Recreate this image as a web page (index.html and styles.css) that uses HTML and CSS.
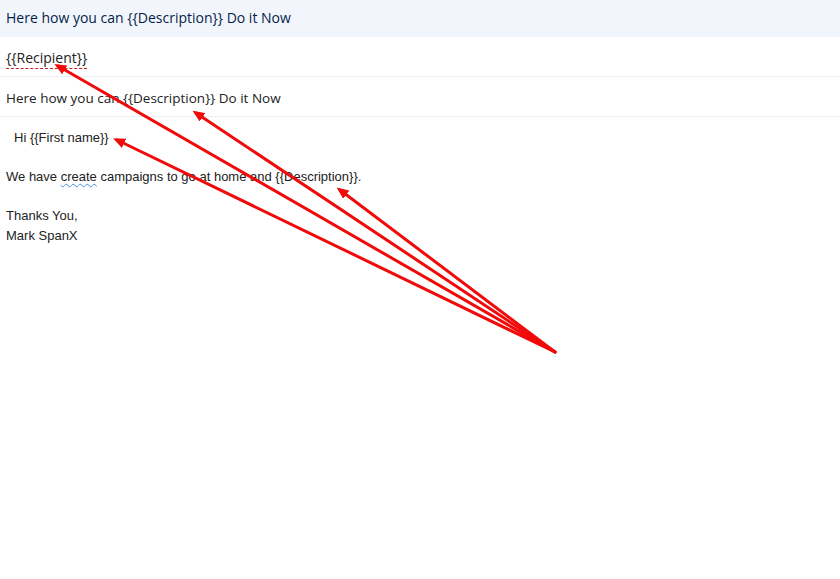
FILE: index.html
```html
<!DOCTYPE html>
<html>
<head>
<meta charset="utf-8">
<link rel="stylesheet" href="styles.css">
</head>
<body>
<div class="compose">
  <div class="head">Here how you can {{Description}} Do it Now</div>
  <div class="row"><span class="recipient">{{Recipient}}</span></div>
  <div class="row subject">Here how you can {{Description}} Do it Now</div>
  <div class="body">
    <div class="hi">Hi {{First name}}</div>
    <div class="gap"></div>
    <div>We have <span class="spell">create</span> campaigns to go at home and {{Description}}.</div>
    <div class="gap"></div>
    <div>Thanks You,</div>
    <div>Mark SpanX</div>
  </div>
  <svg class="arrows" width="840" height="579" viewBox="0 0 840 579">
    <defs>
      <marker id="ah" markerWidth="4" markerHeight="3.4" refX="2.6" refY="1.7" orient="auto" markerUnits="strokeWidth">
        <path d="M0,0 L4,1.7 L0,3.4 Z" fill="#f00a0a"/>
      </marker>
    </defs>
    <g stroke="#f00a0a" stroke-width="3" fill="none" stroke-linecap="round">
      <line x1="555" y1="352" x2="58" y2="66" marker-end="url(#ah)"/>
      <line x1="555" y1="352" x2="196" y2="113" marker-end="url(#ah)"/>
      <line x1="555" y1="352" x2="117" y2="140" marker-end="url(#ah)"/>
      <line x1="555" y1="352" x2="340" y2="190" marker-end="url(#ah)"/>
    </g>
  </svg>
</div>
</body>
</html>
```
FILE: styles.css
```css
html, body {
  margin: 0;
  padding: 0;
  background: #fff;
}
.compose {
  position: relative;
  width: 840px;
  height: 579px;
  overflow: hidden;
}
.head {
  height: 37px;
  box-sizing: border-box;
  background: #f2f6fc;
  color: #041e49;
  font-family: "Open Sans", sans-serif;
  font-size: 14px;
  font-weight: 500;
  padding: 8px 6px 0;
  line-height: 20px;
}
.row {
  height: 40px;
  box-sizing: border-box;
  border-bottom: 1px solid #eceff1;
  font-family: "Open Sans", sans-serif;
  font-size: 14px;
  color: #222;
  padding: 11px 6px 0;
  line-height: 20px;
}
.subject {
  font-size: 13.5px;
}
.recipient {
  border-bottom: 1px dashed #c5221f;
  padding-bottom: 1px;
}
.body {
  font-family: "Liberation Sans", Arial, sans-serif;
  font-size: 13px;
  line-height: 19.5px;
  color: #222;
  padding: 11px 6px 0;
}
.hi {
  padding-left: 8px;
}
.gap {
  height: 19.5px;
}
.spell {
  text-decoration: underline wavy #4a86e8;
  text-decoration-thickness: 1px;
  text-underline-offset: 2px;
}
.arrows {
  position: absolute;
  left: 0;
  top: 0;
  pointer-events: none;
}
```
